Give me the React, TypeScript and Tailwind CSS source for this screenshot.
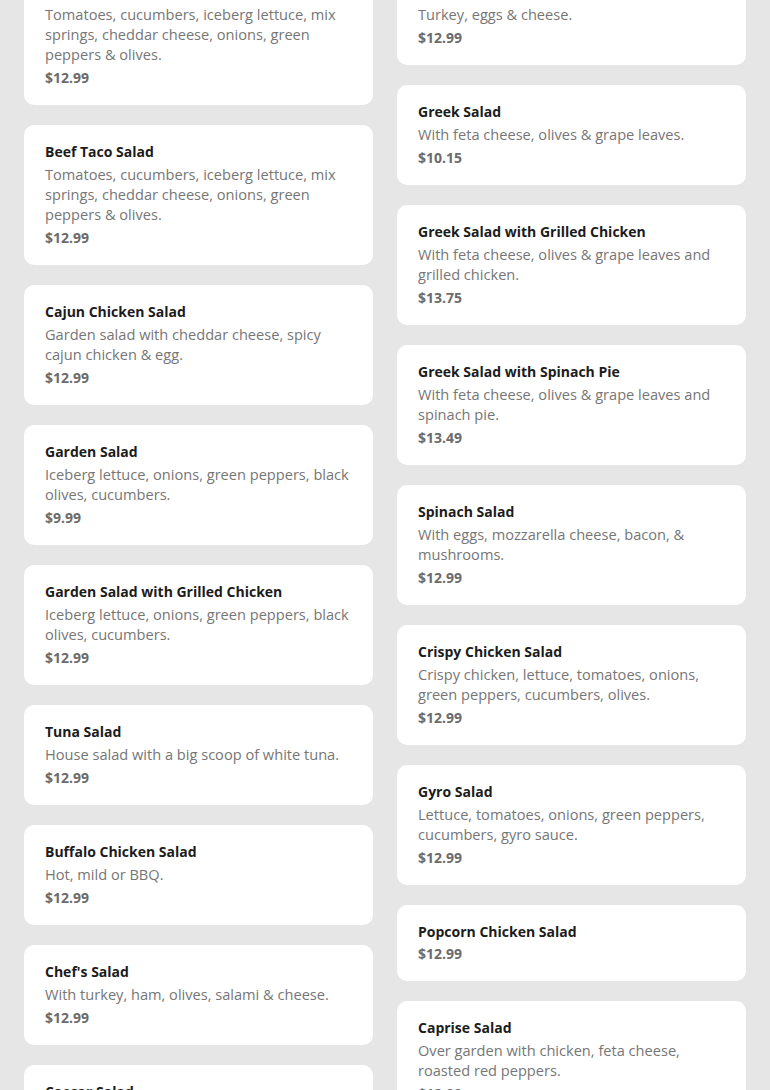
import React from 'react';

interface Item { name: string; desc?: string; price: string; }

const left: Item[] = [
  { name: 'Taco Salad', desc: 'Tomatoes, cucumbers, iceberg lettuce, mix springs, cheddar cheese, onions, green peppers & olives.', price: '$12.99' },
  { name: 'Beef Taco Salad', desc: 'Tomatoes, cucumbers, iceberg lettuce, mix springs, cheddar cheese, onions, green peppers & olives.', price: '$12.99' },
  { name: 'Cajun Chicken Salad', desc: 'Garden salad with cheddar cheese, spicy cajun chicken & egg.', price: '$12.99' },
  { name: 'Garden Salad', desc: 'Iceberg lettuce, onions, green peppers, black olives, cucumbers.', price: '$9.99' },
  { name: 'Garden Salad with Grilled Chicken', desc: 'Iceberg lettuce, onions, green peppers, black olives, cucumbers.', price: '$12.99' },
  { name: 'Tuna Salad', desc: 'House salad with a big scoop of white tuna.', price: '$12.99' },
  { name: 'Buffalo Chicken Salad', desc: 'Hot, mild or BBQ.', price: '$12.99' },
  { name: "Chef's Salad", desc: 'With turkey, ham, olives, salami & cheese.', price: '$12.99' },
  { name: 'Caesar Salad', desc: 'Romaine lettuce, croutons & parmesan cheese.', price: '$10.99' },
];

const right: Item[] = [
  { name: 'Club Salad', desc: 'Turkey, eggs & cheese.', price: '$12.99' },
  { name: 'Greek Salad', desc: 'With feta cheese, olives & grape leaves.', price: '$10.15' },
  { name: 'Greek Salad with Grilled Chicken', desc: 'With feta cheese, olives & grape leaves and grilled chicken.', price: '$13.75' },
  { name: 'Greek Salad with Spinach Pie', desc: 'With feta cheese, olives & grape leaves and spinach pie.', price: '$13.49' },
  { name: 'Spinach Salad', desc: 'With eggs, mozzarella cheese, bacon, & mushrooms.', price: '$12.99' },
  { name: 'Crispy Chicken Salad', desc: 'Crispy chicken, lettuce, tomatoes, onions, green peppers, cucumbers, olives.', price: '$12.99' },
  { name: 'Gyro Salad', desc: 'Lettuce, tomatoes, onions, green peppers, cucumbers, gyro sauce.', price: '$12.99' },
  { name: 'Popcorn Chicken Salad', price: '$12.99' },
  { name: 'Caprise Salad', desc: 'Over garden with chicken, feta cheese, roasted red peppers.', price: '$12.99' },
];

function Card({ item }: { item: Item }) {
  return (
    <div className="flex flex-col rounded-[10px] bg-white px-[21px] pt-[17px] pb-[17px]">
      <h3 className="text-[14px] font-bold leading-[20px] text-[#1c1c1c]">{item.name}</h3>
      {item.desc && <p className="mt-[2px] mb-[2px] text-[14.6px] leading-[20px] text-[#767676]">{item.desc}</p>}
      <p className="mt-[2px] text-[14px] font-bold leading-[20px] text-[#6b6b6b]">{item.price}</p>
    </div>
  );
}

export default function App() {
  return (
    <div className="h-[1090px] overflow-hidden bg-[#e6e6e6]" style={{ fontFamily: '"Open Sans", "Noto Sans", sans-serif' }}>
      <div className="-mt-[35px] grid grid-cols-2 items-start gap-x-[24px] px-[24px]">
        <div className="flex flex-col gap-[20px]">
          {left.map((it) => <Card key={it.name} item={it} />)}
        </div>
        <div className="flex flex-col gap-[20px]">
          {right.map((it) => <Card key={it.name} item={it} />)}
        </div>
      </div>
    </div>
  );
}
